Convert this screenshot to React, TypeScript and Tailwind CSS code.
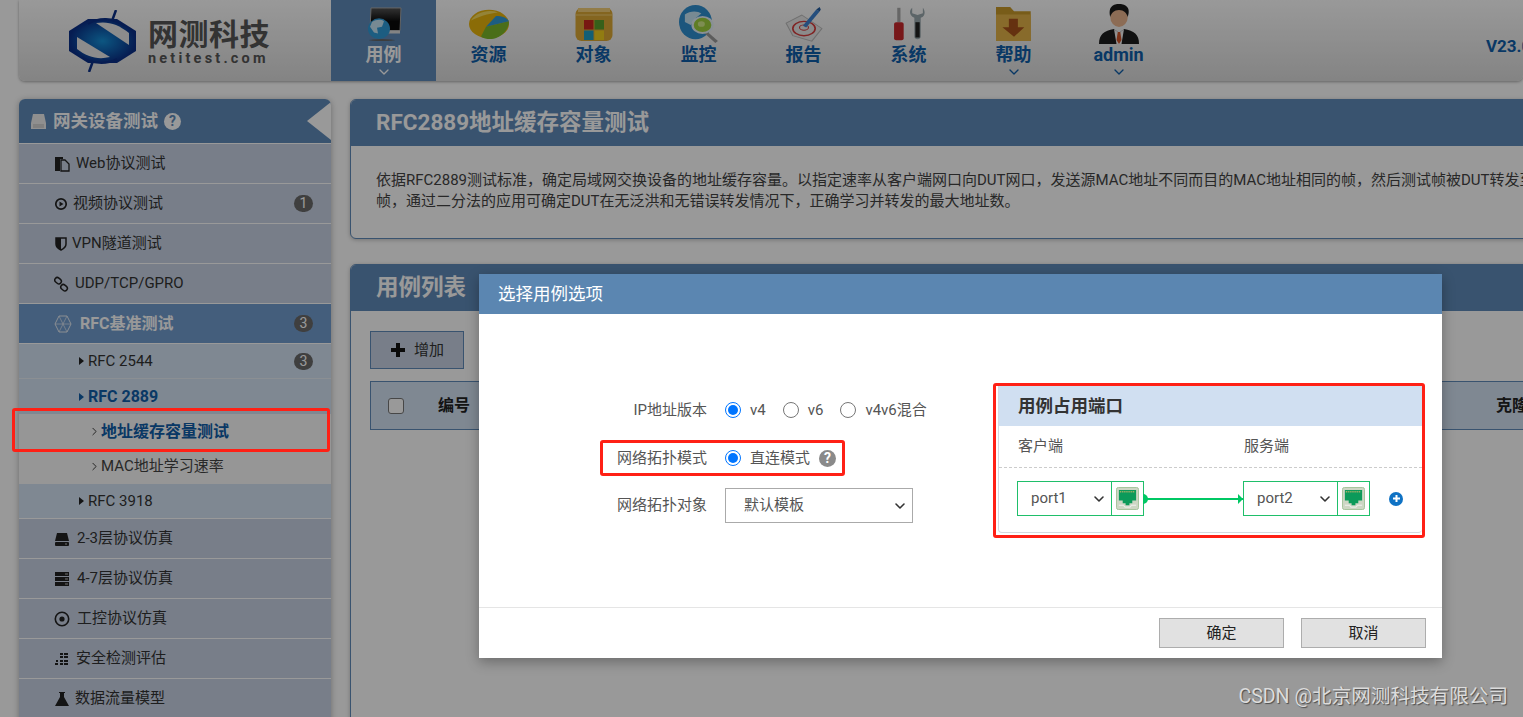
import React from 'react';
import { ChevronDown, ChevronRight } from 'lucide-react';

const CJK = "font-['Roboto','Noto_Sans_CJK_SC',sans-serif]";

// small hand drawn pictures for the top menu
const MonitorIcon = () => (
  <svg width="36" height="34" viewBox="0 0 36 36" preserveAspectRatio="none">
    <defs>
      <linearGradient id="screen" x1="0" y1="0" x2="0" y2="1">
        <stop offset="0%" stopColor="#555" />
        <stop offset="60%" stopColor="#0a0a0a" />
      </linearGradient>
    </defs>
    <path d="M5 1h30l-1 24H4z" fill="url(#screen)" stroke="#aaa" />
    <path d="M22 25h12v3H20z" fill="#ddd" />
    <circle cx="13" cy="23" r="11" fill="#2f9bd8" />
    <path d="M6 16c4-3 9-3 12-1l-2 6-5 1 1 6-4-1-4-6z" fill="#c6e6f6" />
    <ellipse cx="16" cy="35" rx="13" ry="1" fill="#666" />
  </svg>
);
const PieIcon = () => (
  <svg width="42" height="32" viewBox="0 0 42 36" preserveAspectRatio="none">
    <ellipse cx="21" cy="18" rx="20" ry="16" fill="#e8b40c" />
    <path d="M18 21 41 15c0 10-9 20-19 20-3 0-7-1-9-3z" fill="#7cb82b" />
    <path d="M18 21 28 9c6 0 11 2 13 6z" fill="#2f9bd8" />
    <path d="M3 14C8 5 20 1 30 5 20 6 10 10 3 14z" fill="#f7dc5e" />
  </svg>
);
const FolderWinIcon = () => (
  <svg width="38" height="34" viewBox="0 0 38 34">
    <rect x="0.5" y="1" width="37" height="33" rx="6" fill="#dda935" />
    <path d="M3 1h32v4H3z" fill="#f3cf78" />
    <path d="M1 8h36" stroke="#f3cf78" />
    <rect x="9" y="13" width="9.500" height="9.500" fill="#c8281e" />
    <rect x="19.500" y="13" width="9.500" height="9.500" fill="#5aa02c" />
    <rect x="9" y="23.500" width="9.500" height="9.500" fill="#1f9fc4" />
    <rect x="19.500" y="23.500" width="9.500" height="9.500" fill="#f2cf1d" />
  </svg>
);
const SearchGlobeIcon = () => (
  <svg width="40" height="38" viewBox="0 0 34 40" preserveAspectRatio="none">
    <ellipse cx="14" cy="18" rx="14" ry="18" fill="#2f8fd0" />
    <path d="M5 10c4-4 11-4 14-1l-5 5-4 7-5-3z" fill="#c8e6f5" />
    <path d="M22 28l10 11" stroke="#999" strokeWidth="3" />
    <circle cx="20" cy="21" r="8.500" fill="#9fd03f" stroke="#e4f1f9" strokeWidth="2" />
    <circle cx="19" cy="20" r="3" fill="#d3ec8a" />
  </svg>
);
const ReportIcon = () => (
  <svg width="38" height="36" viewBox="0 0 34 40" preserveAspectRatio="none">
    <path d="M1 19 15 10l18 15-9 14-17-6z" fill="#e8e8e8" stroke="#bbb" />
    <ellipse cx="17" cy="25" rx="10" ry="8" fill="none" stroke="#d63c3c" strokeWidth="1.5" />
    <ellipse cx="17" cy="24" rx="4" ry="3" fill="none" stroke="#d63c3c" />
    <path d="M16 22 28 4l3 2-12 18z" fill="#3f83d0" />
    <path d="M28 4l3-3 1 3-1 2z" fill="#245d9e" />
  </svg>
);
const ToolsIcon = () => (
  <svg width="32" height="36" viewBox="0 0 30 40" preserveAspectRatio="none">
    <rect x="4" y="2" width="3" height="16" fill="#aaa" />
    <rect x="1" y="18" width="9" height="20" rx="2" fill="#c8282c" />
    <path d="M18 2c-3 3-3 9 2 11v21c0 4 6 4 6 0V13c5-2 4-8 2-11v6l-5 2-5-2z" fill="#9aa8ad" />
    <rect x="21" y="18" width="4" height="17" fill="#222" />
  </svg>
);
const FolderDownIcon = () => (
  <svg width="36" height="34" viewBox="0 0 28 32" preserveAspectRatio="none">
    <path d="M0 0h11l3 4h13v28H0z" fill="#c99a2a" />
    <path d="M0 7h27v25H0z" fill="#e3b348" />
    <path d="M10 11h7v8h5l-8 9-9-9h5z" fill="#a8521b" />
  </svg>
);
const PersonIcon = () => (
  <svg width="40" height="40" viewBox="0 0 32 40" preserveAspectRatio="none">
    <ellipse cx="16" cy="13" rx="7" ry="10" fill="#eab48e" />
    <path d="M9 13C7 2 12 0 16 0s10 2 7 13c-1-4-3-7-7-7s-6 3-7 7z" fill="#1c1c1c" />
    <path d="M0 40c0-10 4-13 12-15l4 4 4-4c8 2 12 5 12 15z" fill="#1d1d1d" />
    <path d="M12 25l4 4 4-4-2 15h-4z" fill="#f2f2f2" />
    <path d="M15 28h2l1 8-2 4-2-4z" fill="#d1552a" />
  </svg>
);
const Logo = () => (
  <svg width="68" height="62" viewBox="0 0 68 62">
    <defs>
      <radialGradient id="logoBand" cx="50%" cy="50%" r="50%">
        <stop offset="0%" stopColor="#1590d8" />
        <stop offset="100%" stopColor="#0a2f88" />
      </radialGradient>
    </defs>
    <path d="M0 21 19 9h29l19 12v20L48 53H19L0 41z" fill="url(#logoBand)" />
    <path d="M27 13c12-2 22 1 33 10v12z" fill="#e9e9e9" />
    <path d="M8 27l33 20c-12 3-23 0-33-8z" fill="#e9e9e9" />
    <path d="M19 14C30 7 44 7 55 16M13 47c10 7 24 8 35 2" fill="none" stroke="#0a2f88" strokeWidth="2" />
    <path d="M47 0l-4 11M20 62l4-11" stroke="#0a2f88" strokeWidth="2.500" />
  </svg>
);

const SideGlyph = ({ name }: { name: string }) => {
  const common = { width: 16, height: 16, viewBox: '0 0 16 16', fill: '#222' };
  switch (name) {
    case 'copy':
      return <svg {...common}><path d="M1 1h8v2H6v12H1z" /><path d="M7 4h4l4 4v7H7z" fill="none" stroke="#222" strokeWidth="1.3" /></svg>;
    case 'play':
      return <svg {...common} width={14} viewBox="0 0 14 16"><circle cx="7" cy="8" r="5.200" fill="none" stroke="#222" strokeWidth="1.700" /><path d="M5.500 5.500l4 2.500-4 2.500z" /></svg>;
    case 'shield':
      return <svg {...common} width={14} viewBox="0 0 14 16"><path d="M2 2h10v6c0 3-3 5-5 6-2-1-5-3-5-6z" fill="none" stroke="#222" strokeWidth="1.500" /><path d="M2 2h5v12c-2-1-5-3-5-6z" /></svg>;
    case 'link':
      return <svg {...common} width={15} viewBox="0 0 15 16"><rect x="1" y="2" width="7" height="5" rx="2.500" transform="rotate(40 4 4)" fill="none" stroke="#222" strokeWidth="1.500" /><rect x="7" y="9" width="7" height="5" rx="2.500" transform="rotate(40 10 11)" fill="none" stroke="#222" strokeWidth="1.500" /></svg>;
    case 'drive':
      return <svg {...common}><path d="M3 2h10l2 8H1z" /><rect x="1" y="11" width="14" height="4" rx="1" /><path d="M11 13h2" stroke="#bbb" /></svg>;
    case 'server':
      return <svg {...common}><path d="M1 1h14v4H1zM1 6h14v4H1zM1 11h14v4H1z" /><path d="M11 3h3M11 8h3M11 13h3" stroke="#bbb" /></svg>;
    case 'target':
      return <svg {...common}><circle cx="8" cy="8" r="6.700" fill="none" stroke="#222" strokeWidth="1.600" /><circle cx="8" cy="8" r="2.600" /></svg>;
    case 'bars':
      return <svg {...common}><path d="M6 2h3v2H6zM10 5h4v2h-4zM6 5h3v2H6zM1 12h3v2H1zM6 9h3v2H6zM10 9h4v2h-4zM6 12h3v2H6zM10 12h4v2h-4zM10 2h4v2h-4zM2 9h2v2H2z" /></svg>;
    default:
      return <svg {...common}><path d="M5 1h6v1h-1v4l5 9H1l5-9V2H5z" /></svg>;
  }
};

const NAV = [
  { label: '用例', icon: <MonitorIcon />, active: true, arrow: true },
  { label: '资源', icon: <PieIcon /> },
  { label: '对象', icon: <FolderWinIcon /> },
  { label: '监控', icon: <SearchGlobeIcon /> },
  { label: '报告', icon: <ReportIcon /> },
  { label: '系统', icon: <ToolsIcon /> },
  { label: '帮助', icon: <FolderDownIcon />, arrow: true },
  { label: 'admin', icon: <PersonIcon />, arrow: true },
];

const Badge = ({ n }: { n: number }) => (
  <span className="ml-auto mr-[18px] w-[19px] h-[17px] rounded-full bg-[#6a6a6a] text-white font-normal text-[14px] leading-[17px] text-center">{n}</span>
);

const MainItem = ({ icon, label, badge, gap = 'ml-[7px]' }: { icon: string; label: string; badge?: number; gap?: string }) => (
  <div className="h-[40px] flex items-center pl-[35px] bg-[#c8d2e4] border-b border-white text-[#333] text-[15px]">
    <SideGlyph name={icon} />
    <span className={gap}>{label}</span>
    {badge ? <Badge n={badge} /> : null}
  </div>
);

const SubItem = ({ label, badge, active, line, h = 'h-[35px]' }: { label: string; badge?: number; active?: boolean; line?: boolean; h?: string }) => (
  <div className={`${h} flex items-center pl-[60px] bg-[#d4e3f4] ${line ? 'border-b border-[#e8eef5]' : ''} ${active ? 'text-[#0f5ea8] font-bold text-[16px]' : 'text-[#333] text-[15px]'}`}>
    <span className={`w-0 h-0 border-y-[4px] border-y-transparent border-l-[5px] mr-[4px] ${active ? 'border-l-[#0f5ea8]' : 'border-l-[#222]'}`} />
    <span>{label}</span>
    {badge ? <Badge n={badge} /> : null}
  </div>
);

const LeafItem = ({ label, active }: { label: string; active?: boolean }) => (
  <div className={`h-[35px] flex items-center pl-[69px] bg-[#fafafa] ${active ? 'text-[#0f5ea8] font-bold text-[16px]' : 'text-[#444] text-[15px]'}`}>
    <ChevronRight size={13} strokeWidth={1.6} className="text-[#222]" />
    <span>{label}</span>
  </div>
);

const Sidebar = () => (
  <aside className="w-[312px] shrink-0 rounded-t-[6px] overflow-hidden shadow-[0_1px_6px_rgba(0,0,0,0.3)]">
    <div className="h-[45px] relative flex items-center pl-[11px] bg-[#5f8ab9] border-b border-white text-white">
      <svg width="17" height="17" viewBox="0 0 17 17" className="mr-[6px]">
        <path d="M3 1h11l2 9v6H1v-6z" fill="#eee" />
        <path d="M3 12h11M3 14h11" stroke="#bbb" />
      </svg>
      <span className="text-[17.5px] font-bold">网关设备测试</span>
      <span className="ml-[6px] w-[17px] h-[17px] rounded-full bg-white text-[#5f8ab9] text-[14px] leading-[17px] font-bold text-center">?</span>
      <span className="absolute right-0 top-[3px] w-0 h-0 border-y-[19px] border-y-transparent border-r-[24px] border-r-white" />
    </div>
    <MainItem icon="copy" label="Web协议测试" gap="ml-[6px]" />
    <MainItem icon="play" label="视频协议测试" badge={1} gap="ml-[5px]" />
    <MainItem icon="shield" label="VPN隧道测试" gap="ml-[4px]" />
    <MainItem icon="link" label="UDP/TCP/GPRO" gap="ml-[6px]" />
    <div className="h-[40px] flex items-center pl-[35px] bg-[#729dcf] border-b border-white text-white text-[16px] font-bold">
      <svg width="18" height="18" viewBox="0 0 18 18" fill="none" stroke="#e6edf5">
        <path d="M5 1h8l4 8-4 8H5L1 9z" />
        <path d="M5 1l8 16M13 1 5 17M1 9h16" strokeWidth="0.7" />
      </svg>
      <span className="ml-[8px]">RFC基准测试</span>
      <Badge n={3} />
    </div>
    <SubItem label="RFC 2544" badge={3} line />
    <SubItem label="RFC 2889" active />
    <LeafItem label="地址缓存容量测试" active />
    <LeafItem label="MAC地址学习速率" />
    <SubItem label="RFC 3918" h="h-[34px]" />
    <div className="border-t border-white">
      <MainItem icon="drive" label="2-3层协议仿真" />
      <MainItem icon="server" label="4-7层协议仿真" />
      <MainItem icon="target" label="工控协议仿真" />
      <MainItem icon="bars" label="安全检测评估" gap="ml-[6px]" />
      <MainItem icon="flask" label="数据流量模型" gap="ml-[5px]" />
    </div>
  </aside>
);

const Panel = ({ title, children, className }: { title: string; children: React.ReactNode; className?: string }) => (
  <section className={`rounded-[6px] border border-[#5f8ab9] overflow-hidden bg-white shadow-[0_1px_4px_rgba(0,0,0,0.25)] ${className ?? ''}`}>
    <div className="h-[46px] bg-[#5f8ab9] flex items-center pl-[25px] text-white text-[22.5px] font-bold">{title}</div>
    {children}
  </section>
);

const Background = () => (
  <>
    <header className="h-[81px] ml-[19px] rounded-b-[6px] flex bg-gradient-to-b from-[#ffffff] to-[#dcdcdc] shadow-[0_1px_3px_rgba(0,0,0,0.35)]">
      <div className="w-[312px] shrink-0 flex items-center pl-[50px]">
        <Logo />
        <div className="ml-[11px] mt-[3px] flex flex-col">
          <span className="text-[30px] leading-[33px] font-bold text-[#555] tracking-[0.5px] whitespace-nowrap">网测科技</span>
          <span className="text-[14.5px] leading-[16px] font-bold text-[#555] tracking-[3.2px]">netitest.com</span>
        </div>
      </div>
      <nav className="flex">
        {NAV.map((item) => (
          <div
            key={item.label}
            className={`w-[105px] h-[81px] flex flex-col items-center ${item.active ? 'bg-[#5f8ab9] text-white' : 'text-[#0f5ea8]'}`}
          >
            <div className="h-[45px] pt-[3px] flex items-center justify-center">{item.icon}</div>
            <span className="text-[18px] leading-[20px] font-bold">{item.label}</span>
            {item.arrow ? <ChevronDown size={16} strokeWidth={2} className="-mt-[1px]" /> : null}
          </div>
        ))}
      </nav>
      <div className="flex-1 min-w-0 overflow-hidden pl-[315px] pt-[34px] text-[#0f5ea8] text-[17px] font-bold whitespace-nowrap">
        V23.0
      </div>
    </header>

    <div className="flex pl-[19px] pt-[18px] gap-[19px]">
      <Sidebar />
      <main className="flex-1 min-w-0 flex flex-col gap-[25px]">
        <Panel title="RFC2889地址缓存容量测试" className="h-[140px] w-[1200px]">
          <div className="pt-[24px] pl-[25px] text-[15px] leading-[21px] text-[#444] whitespace-nowrap">
            <p>依据RFC2889测试标准，确定局域网交换设备的地址缓存容量。以指定速率从客户端网口向DUT网口，发送源MAC地址不同而目的MAC地址相同的帧，然后测试帧被DUT转发至</p>
            <p>帧，通过二分法的应用可确定DUT在无泛洪和无错误转发情况下，正确学习并转发的最大地址数。</p>
          </div>
        </Panel>
        <Panel title="用例列表" className="h-[460px] w-[1200px]">
          <div className="px-[19px] pt-[20px]">
            <button className="w-[94px] h-[38px] flex items-center justify-center gap-[8px] bg-[#c8d2e4] border border-[#5f8ab9] text-[15px] text-[#333]">
              <svg width="16" height="16" viewBox="0 0 16 16"><path d="M6 1h4v5h5v4h-5v5H6v-5H1V6h5z" fill="#111" /></svg>
              增加
            </button>
            <div className="mt-[12px] h-[49px] flex items-center bg-[#d4e3f4] border border-[#5f8ab9] w-[1172px] whitespace-nowrap">
              <span className="ml-[17px] w-[16px] h-[16px] rounded-[3px] border border-[#777] bg-white" />
              <span className="ml-[34px] text-[16px] font-bold text-[#222]">编号</span>
              <span className="ml-[1026px] text-[16px] font-bold text-[#222]">克隆</span>
            </div>
          </div>
        </Panel>
      </main>
    </div>
  </>
);

const Radio = ({ on, label }: { on?: boolean; label: string }) => (
  <label className="flex items-center gap-[9px] whitespace-nowrap">
    <span className={`w-[16px] h-[16px] rounded-full border flex items-center justify-center bg-white ${on ? 'border-[#0075ff]' : 'border-[#767676]'}`}>
      {on ? <span className="w-[10px] h-[10px] rounded-full bg-[#0075ff]" /> : null}
    </span>
    <span>{label}</span>
  </label>
);

const RjIcon = () => (
  <svg width="23" height="23" viewBox="0 0 24 24">
    <rect x="0.5" y="0.5" width="23" height="23" rx="2" fill="#cdd6c4" stroke="#a3c29a" />
    <path d="M3 3h18v11h-4v3h-3v2h-4v-2H7v-3H3z" fill="#0c9a5a" />
    <path d="M4 5h16" stroke="#c9b36a" strokeWidth="1.400" strokeDasharray="1 1" />
    <path d="M3 19h5l1 2h6l1-2h5" fill="none" stroke="#f2f2f2" />
  </svg>
);

const PortSelect = ({ label }: { label: string }) => (
  <div className="w-[127px] h-[35px] flex border border-[#1fbf6a] bg-white">
    <div className="flex-1 flex items-center pl-[13px] text-[15px] text-[#555]">
      {label}
      <ChevronDown size={16} strokeWidth={2.400} className="ml-auto mr-[4px] text-[#333]" />
    </div>
    <div className="w-[32px] border-l border-[#1fbf6a] flex items-center justify-center">
      <RjIcon />
    </div>
  </div>
);

const Modal = () => (
  <div className="absolute left-[479px] top-[274px] w-[963px] h-[384px] bg-white flex flex-col shadow-[0_4px_12px_rgba(0,0,0,0.3)]">
    <div className="h-[40px] shrink-0 bg-[#5b86b1] text-white text-[17.5px] flex items-center pl-[19px]">选择用例选项</div>
    <div className="flex-1 flex pt-[69px] pl-[122px] border-b border-[#e5e5e5]">
      <div className="w-[392px] shrink-0 text-[15px] text-[#555] pt-[15px]">
        <div className="h-[24px] flex items-center">
          <span className="w-[106px] text-right whitespace-nowrap">IP地址版本</span>
          <div className="ml-[18px] flex items-center gap-[17px]">
            <Radio on label="v4" />
            <Radio label="v6" />
            <Radio label="v4v6混合" />
          </div>
        </div>
        <div className="mt-[18px] -ml-[1px] w-[245px] h-[36px] flex items-center border-[3px] border-[#ff2015] rounded-[3px]">
          <span className="w-[104px] text-right whitespace-nowrap">网络拓扑模式</span>
          <div className="ml-[18px] flex items-center gap-[9px]">
            <Radio on label="直连模式" />
            <span className="w-[17px] h-[17px] rounded-full bg-[#8a8a8a] text-white text-[14px] leading-[17px] font-bold text-center">?</span>
          </div>
        </div>
        <div className="mt-[12px] h-[35px] flex items-center">
          <span className="w-[106px] text-right whitespace-nowrap">网络拓扑对象</span>
          <div className="ml-[18px] w-[188px] h-[35px] border border-[#aaa] flex items-center pl-[18px]">
            默认模板
            <ChevronDown size={16} strokeWidth={2.400} className="ml-auto mr-[4px] text-[#333]" />
          </div>
        </div>
      </div>
      <div className="w-[432px] h-[155px] border-[3px] border-[#ff2015] rounded-[3px] pl-[2px] pb-[2px]">
        <div className="h-full rounded-b-[4px] border-l border-b border-[#d5d9df] overflow-hidden">
          <div className="h-[40px] bg-[#d0dff1] flex items-center pl-[19px] text-[17.5px] font-bold text-[#333]">用例占用端口</div>
          <div className="h-[42px] flex items-center pl-[19px] border-b border-dashed border-[#ccc] text-[15px] text-[#555]">
            <span className="w-[226px]">客户端</span>
            <span>服务端</span>
          </div>
          <div className="flex items-center pl-[18px] pt-[13px]">
            <PortSelect label="port1" />
            <div className="relative w-[99px] h-[2px] bg-[#00c864]">
              <span className="absolute -left-[1px] -top-[4px] w-[5px] h-[10px] rounded-r-full bg-[#00c864]" />
              <span className="absolute right-0 -top-[4px] w-0 h-0 border-y-[5px] border-y-transparent border-l-[5px] border-l-[#00c864]" />
            </div>
            <PortSelect label="port2" />
            <span className="ml-[19px] w-[14px] h-[14px] rounded-full bg-[#0f72c4] flex items-center justify-center">
              <svg width="9" height="9" viewBox="0 0 9 9"><path d="M3.500 1h2v2.500h2.500v2h-2.500v2.500h-2v-2.500h-2.500v-2h2.500z" fill="#fff" /></svg>
            </span>
          </div>
        </div>
      </div>
    </div>
    <div className="h-[50px] shrink-0 flex items-start justify-end gap-[17px] pt-[10px] pr-[16px]">
      <button className="w-[125px] h-[30px] bg-[#e1e1e1] border border-[#adadad] text-[15px] text-[#222]">确定</button>
      <button className="w-[125px] h-[30px] bg-[#e1e1e1] border border-[#adadad] text-[15px] text-[#222]">取消</button>
    </div>
  </div>
);

export default function App() {
  return (
    <div className={`relative w-[1523px] h-[717px] overflow-hidden bg-white ${CJK}`}>
      <Background />
      <div className="absolute inset-0 bg-black/40" />
      <Modal />
      {/* red box around the selected tree row sits above the dim layer */}
      <div className="absolute left-[12px] top-[408px] w-[318px] h-[44px] border-[3px] border-[#ff2015] rounded-[3px]" />
      <div className="absolute right-[15px] top-[686px] text-[19.6px] leading-[22px] text-[#dcdcdc] [text-shadow:1px_1px_1px_rgba(0,0,0,0.5)]">CSDN @北京网测科技有限公司</div>
    </div>
  );
}
